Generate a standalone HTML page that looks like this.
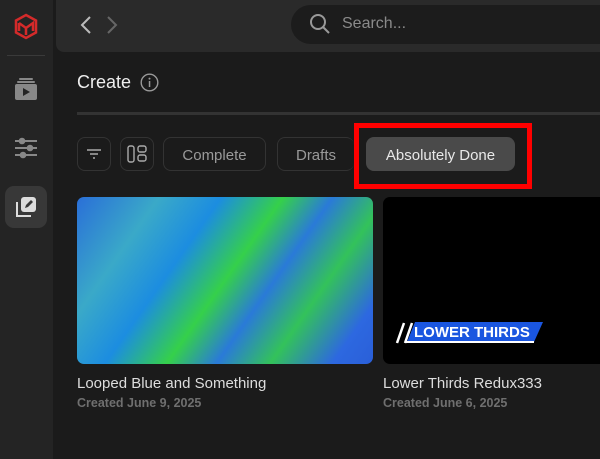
<!DOCTYPE html>
<html><head><style>
*{margin:0;padding:0;box-sizing:border-box}
body{width:600px;height:459px;overflow:hidden;background:#1b1b1b;font-family:"Liberation Sans",sans-serif;position:relative}
.side{position:absolute;left:0;top:0;width:53px;height:459px;background:#242424}
.top{position:absolute;left:56px;top:0;width:560px;height:52px;background:#2a2a2a;border-bottom-left-radius:8px}
.search{position:absolute;left:291px;top:5px;width:330px;height:39px;background:#1c1c1c;border-radius:20px}
.abs{position:absolute}
.btn{position:absolute;top:137px;height:34px;border:1px solid #333;border-radius:8px;color:#9a9a9a;font-size:15px;line-height:35px;text-align:center}
</style></head><body>
<div class="side">
<svg class="abs" style="left:14px;top:13px" width="24" height="27" viewBox="0 0 24 27"><path d="M12 2 L22 7.5 V19.5 L12 25 L2 19.5 V7.5 Z" fill="none" stroke="#d42a2a" stroke-width="2.5"/><path d="M5 10 L12 15 L19 10 V18 M5 10 V18 M12 15 V22" fill="none" stroke="#d42a2a" stroke-width="2.5"/></svg>
<div class="abs" style="left:7px;top:55px;width:38px;height:1px;background:#3a3a3a"></div>
<svg class="abs" style="left:14px;top:77px" width="24" height="24" viewBox="0 0 24 24"><rect x="5" y="1" width="14" height="2" rx="1" fill="#888"/><rect x="3" y="4" width="18" height="2" rx="1" fill="#888"/><rect x="1" y="7" width="22" height="16" rx="2" fill="#888"/><path d="M9 11 L16 15 L9 19Z" fill="#242424"/></svg>
<svg class="abs" style="left:14px;top:136px" width="24" height="24" viewBox="0 0 24 24" stroke="#888" stroke-width="2"><path d="M1 5H23M1 12H23M1 19H23"/><circle cx="8" cy="5" r="2.3" fill="#888"/><circle cx="16" cy="12" r="2.3" fill="#888"/><circle cx="9" cy="19" r="2.3" fill="#888"/></svg>
<div class="abs" style="left:5px;top:186px;width:42px;height:42px;background:#383838;border-radius:9px"></div>
<svg class="abs" style="left:14px;top:195px" width="24" height="24" viewBox="0 0 24 24"><path d="M3 7 V21 H17" fill="none" stroke="#ddd" stroke-width="2"/><rect x="7" y="2" width="15" height="15" rx="3" fill="#ddd"/><path d="M11 13 L12 10 L17 5 L19 7 L14 12 Z" fill="#383838"/></svg>
</div>
<div class="top"></div>
<svg class="abs" style="left:78px;top:15px" width="40" height="20" viewBox="0 0 40 20" fill="none" stroke-width="2"><path d="M12 2 L4 10 L12 18" stroke="#bbb"/><path d="M30 2 L38 10 L30 18" stroke="#666"/></svg>
<div class="search"></div>
<svg class="abs" style="left:309px;top:13px" width="22" height="22" viewBox="0 0 22 22" fill="none" stroke="#999" stroke-width="2"><circle cx="9" cy="9" r="7"/><path d="M14 14 L20 20"/></svg>
<div class="abs" style="left:342px;top:15px;color:#8a8a8a;font-size:16px">Search...</div>
<div class="abs" style="left:77px;top:72px;color:#eee;font-size:18px">Create</div>
<svg class="abs" style="left:140px;top:73px" width="19" height="19" viewBox="0 0 19 19"><circle cx="9.5" cy="9.5" r="8.3" fill="none" stroke="#999" stroke-width="1.4"/><rect x="8.8" y="8" width="1.5" height="6" fill="#999"/><circle cx="9.5" cy="5.6" r="1" fill="#999"/></svg>
<div class="abs" style="left:77px;top:112px;width:530px;height:3px;background:#333"></div>
<div class="btn" style="left:77px;width:34px"></div>
<svg class="abs" style="left:86px;top:146px" width="16" height="16" viewBox="0 0 16 16" stroke="#aaa" stroke-width="1.5"><path d="M1 4H15M4 8H12M7 12H9"/></svg>
<div class="btn" style="left:120px;width:34px"></div>
<svg class="abs" style="left:127px;top:145px" width="20" height="18" viewBox="0 0 20 18" fill="none" stroke="#aaa" stroke-width="1.4"><rect x="1" y="1" width="6" height="16" rx="2"/><rect x="11" y="1" width="8" height="6" rx="2"/><rect x="11" y="10" width="8" height="6" rx="2"/></svg>
<div class="btn" style="left:163px;width:103px">Complete</div>
<div class="btn" style="left:277px;width:77px;border-right:none">Drafts</div>
<div class="btn" style="left:366px;width:149px;background:#4a4a4a;border-color:#4a4a4a;color:#e8e8e8">Absolutely Done</div>
<div class="abs" style="left:354px;top:123px;width:178px;height:66px;border:5px solid #f00"></div>
<div class="abs" style="left:77px;top:197px;width:296px;height:167px;border-radius:7px;background:linear-gradient(125deg,#2a6fd8 0%,#3aa9c8 20%,#1c8de0 35%,#35d04a 50%,#2a7ad8 62%,#33c25a 75%,#2d68e0 90%,#2a5fd8 100%)"></div>
<div class="abs" style="left:383px;top:197px;width:230px;height:167px;border-radius:7px;background:#000"></div>
<svg class="abs" style="left:391px;top:321px" width="154" height="23" viewBox="0 0 154 23"><path d="M6 22 L13 2 M14 22 L21 2" stroke="#fff" stroke-width="2.5"/><path d="M24 1 H152 L143 21 H16 Z" fill="#1a56e0"/><path d="M14 21 H143" stroke="#fff" stroke-width="2"/><text x="23" y="16" fill="#fff" font-family="Liberation Sans" font-weight="bold" font-size="15">LOWER THIRDS</text></svg>
<div class="abs" style="left:77px;top:375px;color:#ddd;font-size:15px">Looped Blue and Something</div>
<div class="abs" style="left:77px;top:396px;color:#6f6f6f;font-size:12.5px;font-weight:bold">Created June 9, 2025</div>
<div class="abs" style="left:383px;top:375px;color:#ddd;font-size:15px">Lower Thirds Redux333</div>
<div class="abs" style="left:383px;top:396px;color:#6f6f6f;font-size:12.5px;font-weight:bold">Created June 6, 2025</div>
</body></html>
